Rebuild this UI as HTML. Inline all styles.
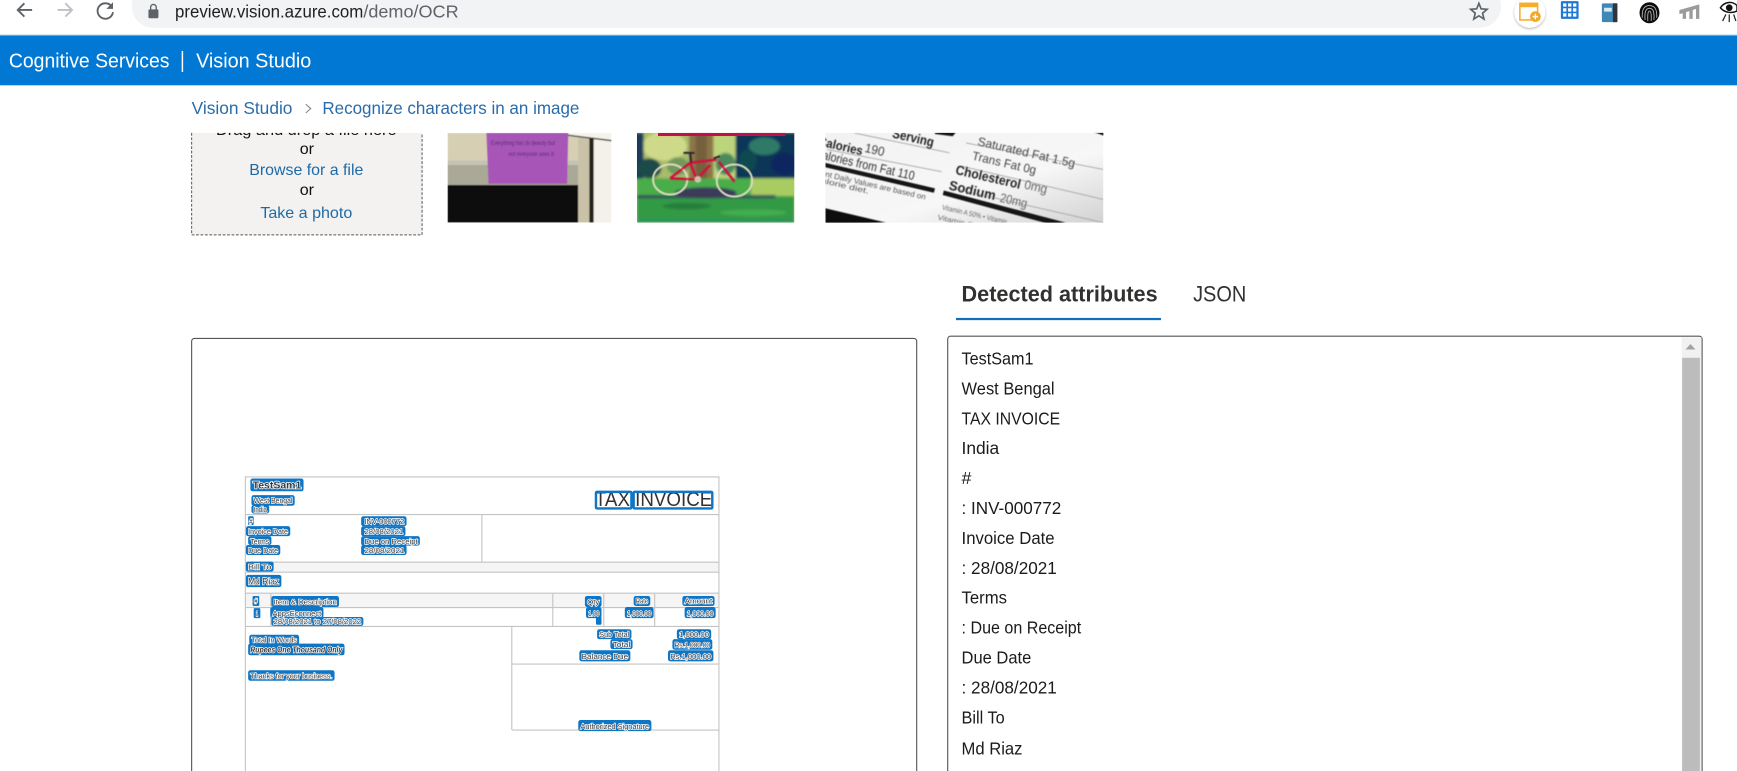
<!DOCTYPE html>
<html lang="en">
<head>
<meta charset="utf-8">
<title>Vision Studio</title>
<style>
html,body{margin:0;padding:0;width:1737px;height:771px;overflow:hidden;background:#fff}
svg{display:block;font-family:"Liberation Sans",sans-serif}
.l{fill:#0f76c6}
.w{fill:#3a3a3a;stroke:#fff;stroke-width:1.3;paint-order:stroke;font-size:7px}
.g{stroke:#c4c4c4;stroke-width:1;fill:none}
.a{font-size:16px;fill:#1b1b1b}
.lnk{fill:#1f6aa5;font-size:14.5px}
.bc{fill:#2a6cab;font-size:15.5px}
</style>
</head>
<body>
<svg width="1737" height="771" viewBox="0 0 1568 696" preserveAspectRatio="none" xmlns="http://www.w3.org/2000/svg">
<defs>
<filter id="b0" x="-5%" y="-5%" width="110%" height="110%"><feGaussianBlur stdDeviation="0.3"/></filter>
<filter id="b1"><feGaussianBlur stdDeviation="0.5"/></filter>
<filter id="b2"><feGaussianBlur stdDeviation="1.2"/></filter>
<filter id="sh" x="-30%" y="-30%" width="160%" height="160%"><feDropShadow dx="0" dy="1" stdDeviation="1.2" flood-color="#000" flood-opacity=".3"/></filter>
<clipPath id="c1"><rect x="404" y="120" width="148" height="81"/></clipPath>
<clipPath id="c2"><rect x="575" y="120" width="142" height="81"/></clipPath>
<clipPath id="c3"><rect x="745" y="120" width="251" height="81"/></clipPath>
<clipPath id="c0"><rect x="173" y="120" width="208" height="92"/></clipPath>
<linearGradient id="gr3" x1="0" y1="0" x2="1" y2="1"><stop offset="0" stop-color="#f2f2f2"/><stop offset=".6" stop-color="#f7f7f7"/><stop offset="1" stop-color="#d2d2d2"/></linearGradient>
</defs>
<rect width="1568" height="696" fill="#fff"/>

<!-- browser chrome -->
<path d="M29 9H16M22 3l-6 6 6 6" fill="none" stroke="#5f6368" stroke-width="1.7"/>
<path d="M52 9h13M59 3l6 6-6 6" fill="none" stroke="#bdc1c6" stroke-width="1.7"/>
<path d="M100.500 5.500A7 7 0 1 0 102 11" fill="none" stroke="#5f6368" stroke-width="1.7"/>
<path d="M102 2v6h-6z" fill="#5f6368"/>
<rect x="119" y="-14" width="1236" height="39" rx="19" fill="#f1f3f4"/>
<rect x="134" y="8.500" width="9" height="8" rx="1" fill="#5f6368"/>
<path d="M136 9V6.500a2.500 2.500 0 0 1 5 0V9" fill="none" stroke="#5f6368" stroke-width="1.200"/>
<text x="158" y="16" font-size="16" fill="#202124" textLength="170" lengthAdjust="spacingAndGlyphs">preview.vision.azure.com</text>
<text x="328" y="16" font-size="16" fill="#5f6368" textLength="86" lengthAdjust="spacingAndGlyphs">/demo/OCR</text>
<path d="M1335 3l2 5 5.400.4-4.100 3.500 1.300 5.300-4.600-2.900-4.600 2.900 1.300-5.300-4.100-3.500 5.400-.4z" fill="none" stroke="#5f6368" stroke-width="1.500"/>
<circle cx="1381" cy="11" r="14" fill="#fff" filter="url(#sh)"/>
<rect x="1372" y="3" width="16" height="15" fill="#fff" stroke="#f5ad2e" stroke-width="1.400"/>
<rect x="1372" y="3" width="16" height="3.500" fill="#f5ad2e"/>
<circle cx="1386" cy="15" r="4.800" fill="#f5a623"/>
<path d="M1386 12.500v5M1383.500 15h5" stroke="#fff" stroke-width="1.300"/>
<rect x="1409" y="1" width="16" height="16" rx="1" fill="#1e78d6"/>
<path d="M1411 3h3v3h-3zM1415.500 3h3v3h-3zM1420 3h3v3h-3zM1411 7.500h3v3h-3zM1415.500 7.500h3v3h-3zM1420 7.500h3v3h-3zM1411 12h3v3h-3zM1415.500 12h3v3h-3zM1420 12h3v3h-3z" fill="#fff"/>
<rect x="1446" y="3" width="14" height="17" rx="1" fill="#3f88b5"/>
<rect x="1456" y="3" width="4" height="17" fill="#30363b"/>
<rect x="1448" y="7" width="7" height="3.500" fill="#dbe9f2"/>
<ellipse cx="1489" cy="11.500" rx="9" ry="9.500" fill="#0c0c0c"/>
<path d="M1482.500 16c-.5-8 2-11 6.500-11s7 3 6.500 11M1485 18c-.5-7 .5-10.500 4-10.500s4.500 3.500 4 10.500M1487.500 19c-.3-5 0-9 1.500-9s1.800 4 1.500 9" fill="none" stroke="#b8b8b8" stroke-width=".8"/>
<path d="M1516 9l18-5v13h-3V8l-3 1v8h-3v-7l-3 1v6h-3v-5l-3 .8z" fill="#9b9b9b"/>
<path d="M1553 7c4-6 11-6 15-2v5c-4 2-11 2-15-3z" fill="#fff" stroke="#111" stroke-width="1.300"/>
<circle cx="1561" cy="7" r="3" fill="#111"/>
<path d="M1555 19l3-6M1561 20v-7M1567 19l-2-6" stroke="#222" stroke-width="1.100" fill="none"/>

<!-- top bar -->
<rect x="0" y="31" width="1568" height="1" fill="#bfe0f5"/>
<rect x="0" y="32" width="1568" height="45" fill="#0078d4"/>
<text x="8" y="61" font-size="18" fill="#fff" textLength="145" lengthAdjust="spacingAndGlyphs">Cognitive Services</text>
<rect x="164" y="46" width="1.300" height="19" fill="#fff"/>
<text x="177" y="61" font-size="18" fill="#fff" textLength="104" lengthAdjust="spacingAndGlyphs">Vision Studio</text>

<!-- breadcrumb -->
<text class="bc" x="173" y="103" textLength="91" lengthAdjust="spacingAndGlyphs">Vision Studio</text>
<path d="M276 94l4.500 4-4.500 4" fill="none" stroke="#8a8886" stroke-width="1"/>
<text class="bc" x="291" y="103" textLength="232" lengthAdjust="spacingAndGlyphs">Recognize characters in an image</text>

<!-- drop zone -->
<rect x="173" y="113" width="208" height="99" fill="#f3f2f1" clip-path="url(#c0)"/>
<path d="M173 120V212H381V120" fill="none" stroke="#555" stroke-width=".9" stroke-dasharray="2.500 1.500"/>
<g clip-path="url(#c0)"><text x="195" y="122" font-size="14.500" fill="#111" textLength="163" lengthAdjust="spacingAndGlyphs">Drag and drop a file here</text></g>
<text x="277" y="139" font-size="14.500" fill="#111" text-anchor="middle">or</text>
<text class="lnk" x="225" y="158" textLength="103" lengthAdjust="spacingAndGlyphs">Browse for a file</text>
<text x="277" y="176" font-size="14.500" fill="#111" text-anchor="middle">or</text>
<text class="lnk" x="235" y="197" textLength="83" lengthAdjust="spacingAndGlyphs">Take a photo</text>

<!-- image 1 -->
<g clip-path="url(#c1)"><g filter="url(#b1)">
<rect x="404" y="120" width="148" height="81" fill="#d6cfb4"/>
<rect x="404" y="145" width="118" height="4" fill="#c4c2b7"/>
<rect x="404" y="149" width="118" height="18" fill="#aaa896"/>
<rect x="404" y="167" width="118" height="34" fill="#0c0c0c"/>
<rect x="522" y="124" width="10" height="77" fill="#c9c2a8"/>
<rect x="532" y="124" width="4" height="77" fill="#23231f"/>
<rect x="536" y="126" width="16" height="75" fill="#f3f1ea"/>
<path d="M512 120H552V126L512 122z" fill="#f4f2ea"/>
<path d="M512 122L552 127" stroke="#3a3833" stroke-width="1.200" fill="none"/>
<path d="M439 120H513L512 166 441 166z" fill="#a855b8"/>
<text x="443" y="131" font-size="6" font-style="italic" fill="#4c2a70" textLength="58" lengthAdjust="spacingAndGlyphs">Everything has its beauty but</text>
<text x="459" y="141" font-size="6" font-style="italic" fill="#4c2a70" textLength="42" lengthAdjust="spacingAndGlyphs">not everyone sees it.</text>
</g></g>

<!-- image 2 -->
<g clip-path="url(#c2)">
<rect x="575" y="120" width="142" height="81" fill="#b6cf60"/>
<g filter="url(#b2)">
<rect x="575" y="120" width="50" height="42" fill="#a8bc6a"/>
<ellipse cx="600" cy="132" rx="20" ry="13" fill="#cfd98a"/>
<rect x="572" y="120" width="9" height="42" fill="#1f3a5c"/>
<ellipse cx="586" cy="152" rx="11" ry="9" fill="#1d4a4a"/>
<ellipse cx="612" cy="150" rx="10" ry="8" fill="#6f9a5a"/>
<rect x="644" y="120" width="22" height="42" fill="#bcd47c"/>
<ellipse cx="655" cy="148" rx="9" ry="10" fill="#4b8a5c"/>
<rect x="664" y="120" width="56" height="41" fill="#0b3558"/>
<ellipse cx="690" cy="132" rx="14" ry="8" fill="#2e7a66"/>
<ellipse cx="708" cy="148" rx="12" ry="10" fill="#0a2560"/>
<ellipse cx="675" cy="145" rx="8" ry="10" fill="#0e4a50"/>
<rect x="622" y="120" width="22" height="56" fill="#8c7448"/>
<rect x="628" y="120" width="10" height="56" fill="#75603c"/>
<rect x="575" y="161" width="142" height="16" fill="#49ad48"/>
<rect x="678" y="161" width="40" height="18" fill="#a9cc62"/>
<rect x="575" y="177" width="142" height="24" fill="#319a45"/>
<ellipse cx="620" cy="186" rx="22" ry="3" fill="#287e3c"/>
<ellipse cx="680" cy="192" rx="30" ry="3" fill="#43ae4e"/>
<path d="M575 176H700V179H575z" fill="#34505a"/>
<ellipse cx="637" cy="174" rx="28" ry="5" fill="#3a3a5a"/>
<rect x="575" y="198" width="142" height="3" fill="#2c9066"/>
</g>
<rect x="594" y="120" width="115" height="2.800" fill="#c20f4c"/>
<g fill="none" filter="url(#b1)">
<ellipse cx="605" cy="162" rx="15.500" ry="13.600" stroke="#e0dcc0" stroke-width="1.800"/>
<ellipse cx="663" cy="163" rx="16" ry="14.500" stroke="#e0dcc0" stroke-width="1.800"/>
<path d="M623 147L647 144M641 149L629 162M623 147L629 162M605 161L629 162M605 161L623 147M649 146L663 164" stroke="#d6103f" stroke-width="2.200"/>
<path d="M617 138h10M623 138l1 9M644 143l6-2" stroke="#2c2c30" stroke-width="1.800"/>
<circle cx="630" cy="162" r="3" fill="#c9c2b0"/>
</g>
</g>

<!-- image 3 -->
<g clip-path="url(#c3)">
<rect x="745" y="120" width="251" height="81" fill="url(#gr3)"/>
<g filter="url(#b1)" fill="#222">
<path d="M844 118L864 118L860 123L844 121zM984 118L998 118L998 123z" fill="#151515"/>
<path d="M745 147L844 170L843 174L745 151z" fill="#151515"/>
<path d="M852 172L962 201L950 203L851 176z" fill="#151515"/>
<path d="M745 188L800 201L745 203z" fill="#111"/>
<g stroke="#a5a5a5" stroke-width=".8" fill="none">
<path d="M771 120L857 138M747 135L850 155M872 129L996 153M868 150L996 180M860 170L996 201"/>
</g>
<text transform="translate(805 124) rotate(13)" font-size="12" font-weight="bold" textLength="38" lengthAdjust="spacingAndGlyphs">Serving</text>
<text transform="translate(738 131) rotate(13)" font-size="11.500" font-weight="bold" textLength="41" lengthAdjust="spacingAndGlyphs">Calories</text>
<text transform="translate(780 137) rotate(13)" font-size="11.500" fill="#444" textLength="18" lengthAdjust="spacingAndGlyphs">190</text>
<text transform="translate(735 142) rotate(13)" font-size="11.500" fill="#333" textLength="92" lengthAdjust="spacingAndGlyphs">Calories from Fat 110</text>
<text transform="translate(726 155) rotate(13)" font-size="7" fill="#555" textLength="112" lengthAdjust="spacingAndGlyphs">Percent Daily Values are based on</text>
<text transform="translate(702 156) rotate(13)" font-size="7" fill="#555" textLength="84" lengthAdjust="spacingAndGlyphs">a 2,000 calorie diet.</text>
<text transform="translate(882 131) rotate(13)" font-size="11" fill="#444" textLength="90" lengthAdjust="spacingAndGlyphs">Saturated Fat 1.5g</text>
<text transform="translate(877 144) rotate(13)" font-size="11" fill="#444" textLength="59" lengthAdjust="spacingAndGlyphs">Trans Fat 0g</text>
<text transform="translate(862 157) rotate(13)" font-size="12" font-weight="bold" textLength="60" lengthAdjust="spacingAndGlyphs">Cholesterol</text>
<text transform="translate(924 170) rotate(13)" font-size="11.500" fill="#666" textLength="21" lengthAdjust="spacingAndGlyphs">0mg</text>
<text transform="translate(856 171) rotate(13)" font-size="12" font-weight="bold" textLength="43" lengthAdjust="spacingAndGlyphs">Sodium</text>
<text transform="translate(902 182) rotate(13)" font-size="11.500" fill="#666" textLength="25" lengthAdjust="spacingAndGlyphs">20mg</text>
<text transform="translate(850 189) rotate(13)" font-size="6.500" fill="#666" textLength="60" lengthAdjust="spacingAndGlyphs">Vitamin A 50% • Vitamin</text>
<text transform="translate(846 198) rotate(13)" font-size="6.500" fill="#666" textLength="50" lengthAdjust="spacingAndGlyphs">Vitamin C 20%</text>
</g>
</g>

<!-- tabs -->
<text x="868" y="272" font-size="20" font-weight="bold" fill="#323130" textLength="177" lengthAdjust="spacingAndGlyphs">Detected attributes</text>
<rect x="863" y="287" width="185" height="2" fill="#106ebe"/>
<text x="1077" y="272" font-size="20" fill="#323130" textLength="48" lengthAdjust="spacingAndGlyphs">JSON</text>

<!-- left frame -->
<path d="M173 696V308a2.500 2.500 0 0 1 2.500-2.500H825a2.500 2.500 0 0 1 2.500 2.500V696" fill="none" stroke="#555" stroke-width="1"/>

<!-- invoice -->
<rect x="222" y="507" width="427" height="9" fill="#f5f5f5"/>
<rect x="222" y="535" width="427" height="13" fill="#f5f5f5"/>
<g class="g">
<path d="M221.500 696V430.500H649V696"/>
<path d="M222 464.500H649M222 507.500H649M222 516.500H649M222 535.500H649M222 548.500H649M222 565.500H649"/>
<path d="M435 465V507M244.500 536V565M499 536V565M545 536V565M591 536V565"/>
<path d="M462 566V659M462 599.500H649M462 659H649"/>
</g>
<text x="537" y="457" font-size="18" fill="#333" textLength="106" lengthAdjust="spacingAndGlyphs" filter="url(#b0)">TAX INVOICE</text>
<g fill="none" stroke="#0f76c6" stroke-width="2.200">
<rect x="538" y="444" width="32" height="15" rx="1"/>
<rect x="572" y="444" width="71" height="15" rx="1"/>
</g>
<g>
<rect class="l" x="226" y="432" width="48" height="11.500" rx="2"/>
<rect class="l" x="227" y="447" width="39" height="9.500" rx="2"/>
<rect class="l" x="227" y="456" width="16" height="7.500" rx="2"/>
<rect class="l" x="224" y="466" width="5" height="8" rx="1"/>
<rect class="l" x="222" y="475" width="40" height="9" rx="2"/>
<rect class="l" x="224" y="484" width="21" height="8" rx="2"/>
<rect class="l" x="222" y="492" width="31" height="9" rx="2"/>
<rect class="l" x="326" y="466" width="41" height="9" rx="2"/>
<rect class="l" x="326" y="475" width="40" height="9" rx="2"/>
<rect class="l" x="326" y="484" width="53" height="8.500" rx="2"/>
<rect class="l" x="326" y="492" width="41" height="9" rx="2"/>
<rect class="l" x="222" y="507" width="25" height="9" rx="2"/>
<rect class="l" x="222" y="519" width="32" height="11" rx="2"/>
<rect class="l" x="228" y="538" width="6" height="9" rx="1"/>
<rect class="l" x="245" y="538" width="61" height="10" rx="2"/>
<rect class="l" x="528" y="538" width="15" height="10" rx="2"/>
<rect class="l" x="572" y="538" width="15" height="9" rx="2"/>
<rect class="l" x="616" y="538" width="29" height="9" rx="2"/>
<rect class="l" x="229" y="549" width="6" height="9" rx="1"/>
<rect class="l" x="244" y="548" width="48" height="10" rx="2"/>
<rect class="l" x="245" y="557" width="83" height="8" rx="2"/>
<rect class="l" x="529" y="548" width="14" height="10" rx="2"/>
<rect class="l" x="538" y="557" width="5" height="7" rx="1"/>
<rect class="l" x="564" y="548" width="26" height="10" rx="2"/>
<rect class="l" x="618" y="548" width="28" height="10" rx="2"/>
<rect class="l" x="225" y="573" width="45" height="9" rx="2"/>
<rect class="l" x="224" y="581" width="87" height="10.500" rx="2"/>
<rect class="l" x="224" y="605" width="78" height="9.500" rx="2"/>
<rect class="l" x="539" y="568" width="31" height="9" rx="2"/>
<rect class="l" x="551" y="577" width="20" height="9" rx="2"/>
<rect class="l" x="523" y="587" width="46" height="10" rx="2"/>
<rect class="l" x="611" y="568" width="31" height="9" rx="2"/>
<rect class="l" x="607" y="577" width="36" height="9.500" rx="2"/>
<rect class="l" x="603" y="587" width="41" height="10" rx="2"/>
<rect class="l" x="522" y="650" width="66" height="10" rx="2"/>
</g>
<g class="w" filter="url(#b0)">
<text x="228" y="441" font-size="9.500" font-weight="bold" textLength="44" lengthAdjust="spacingAndGlyphs">TestSam1</text>
<text x="229" y="454" textLength="35" lengthAdjust="spacingAndGlyphs">West Bengal</text>
<text x="229" y="462" textLength="12" lengthAdjust="spacingAndGlyphs">India</text>
<text x="225" y="473" textLength="3" lengthAdjust="spacingAndGlyphs">#</text>
<text x="224" y="482" textLength="36" lengthAdjust="spacingAndGlyphs">Invoice Date</text>
<text x="226" y="491" textLength="17" lengthAdjust="spacingAndGlyphs">Terms</text>
<text x="224" y="499" textLength="27" lengthAdjust="spacingAndGlyphs">Due Date</text>
<text x="329" y="473" textLength="36" lengthAdjust="spacingAndGlyphs">INV-000772</text>
<text x="329" y="482" textLength="35" lengthAdjust="spacingAndGlyphs">28/08/2021</text>
<text x="329" y="491" textLength="48" lengthAdjust="spacingAndGlyphs">Due on Receipt</text>
<text x="329" y="499" textLength="36" lengthAdjust="spacingAndGlyphs">28/08/2021</text>
<text x="224" y="514" textLength="21" lengthAdjust="spacingAndGlyphs">Bill To</text>
<text x="224" y="527.500" font-size="8" textLength="28" lengthAdjust="spacingAndGlyphs">Md Riaz</text>
<text x="229.500" y="545" textLength="3" lengthAdjust="spacingAndGlyphs">#</text>
<text x="247" y="545.500" textLength="57" lengthAdjust="spacingAndGlyphs">Item &amp; Description</text>
<text x="530" y="545.500" textLength="11" lengthAdjust="spacingAndGlyphs">Qty</text>
<text x="574" y="545" textLength="11" lengthAdjust="spacingAndGlyphs">Rate</text>
<text x="618" y="545" textLength="25" lengthAdjust="spacingAndGlyphs">Amount</text>
<text x="231" y="556" textLength="2" lengthAdjust="spacingAndGlyphs">1</text>
<text x="246" y="556" textLength="44" lengthAdjust="spacingAndGlyphs">AppsEconnect</text>
<text x="247" y="563.500" font-size="6.500" textLength="79" lengthAdjust="spacingAndGlyphs">28/08/2021 to 27/08/2022</text>
<text x="531" y="556" textLength="10" lengthAdjust="spacingAndGlyphs">1.00</text>
<text x="566" y="556" textLength="22" lengthAdjust="spacingAndGlyphs">1,000.00</text>
<text x="620" y="556" textLength="24" lengthAdjust="spacingAndGlyphs">1,000.00</text>
<text x="227" y="580" textLength="41" lengthAdjust="spacingAndGlyphs">Total In Words</text>
<text x="226" y="589" font-size="7.500" font-style="italic" font-weight="bold" textLength="83" lengthAdjust="spacingAndGlyphs">Rupees One Thousand Only</text>
<text x="226" y="612.500" textLength="74" lengthAdjust="spacingAndGlyphs">Thanks for your business.</text>
<text x="541" y="575" textLength="27" lengthAdjust="spacingAndGlyphs">Sub Total</text>
<text x="553" y="584" textLength="16" lengthAdjust="spacingAndGlyphs">Total</text>
<text x="525" y="595" textLength="42" lengthAdjust="spacingAndGlyphs">Balance Due</text>
<text x="613" y="575" textLength="27" lengthAdjust="spacingAndGlyphs">1,000.00</text>
<text x="609" y="584.500" textLength="32" lengthAdjust="spacingAndGlyphs">Rs.1,000.00</text>
<text x="605" y="595" textLength="37" lengthAdjust="spacingAndGlyphs">Rs.1,000.00</text>
<text x="524" y="658" textLength="62" lengthAdjust="spacingAndGlyphs">Authorized Signature</text>
</g>

<!-- right panel -->
<path d="M855.500 696V306a2.500 2.500 0 0 1 2.500-2.500H1534a2.500 2.500 0 0 1 2.500 2.500V696" fill="none" stroke="#555" stroke-width="1"/>
<rect x="1518" y="304.500" width="18" height="392" fill="#f1f1f1"/>
<path d="M1526 310.500l4.500 5h-9z" fill="#a3a3a3"/>
<rect x="1518.500" y="323" width="16" height="373" fill="#bcbcbc"/>
<g class="a">
<text x="868" y="329" textLength="65" lengthAdjust="spacingAndGlyphs">TestSam1</text>
<text x="868" y="356" textLength="84" lengthAdjust="spacingAndGlyphs">West Bengal</text>
<text x="868" y="383" textLength="89" lengthAdjust="spacingAndGlyphs">TAX INVOICE</text>
<text x="868" y="410" textLength="34" lengthAdjust="spacingAndGlyphs">India</text>
<text x="868" y="437" textLength="9" lengthAdjust="spacingAndGlyphs">#</text>
<text x="868" y="464" textLength="90" lengthAdjust="spacingAndGlyphs">: INV-000772</text>
<text x="868" y="491" textLength="84" lengthAdjust="spacingAndGlyphs">Invoice Date</text>
<text x="868" y="518" textLength="86" lengthAdjust="spacingAndGlyphs">: 28/08/2021</text>
<text x="868" y="545" textLength="41" lengthAdjust="spacingAndGlyphs">Terms</text>
<text x="868" y="572" textLength="108" lengthAdjust="spacingAndGlyphs">: Due on Receipt</text>
<text x="868" y="599" textLength="63" lengthAdjust="spacingAndGlyphs">Due Date</text>
<text x="868" y="626" textLength="86" lengthAdjust="spacingAndGlyphs">: 28/08/2021</text>
<text x="868" y="653" textLength="39" lengthAdjust="spacingAndGlyphs">Bill To</text>
<text x="868" y="681" textLength="55" lengthAdjust="spacingAndGlyphs">Md Riaz</text>
</g>
</svg>
</body>
</html>
